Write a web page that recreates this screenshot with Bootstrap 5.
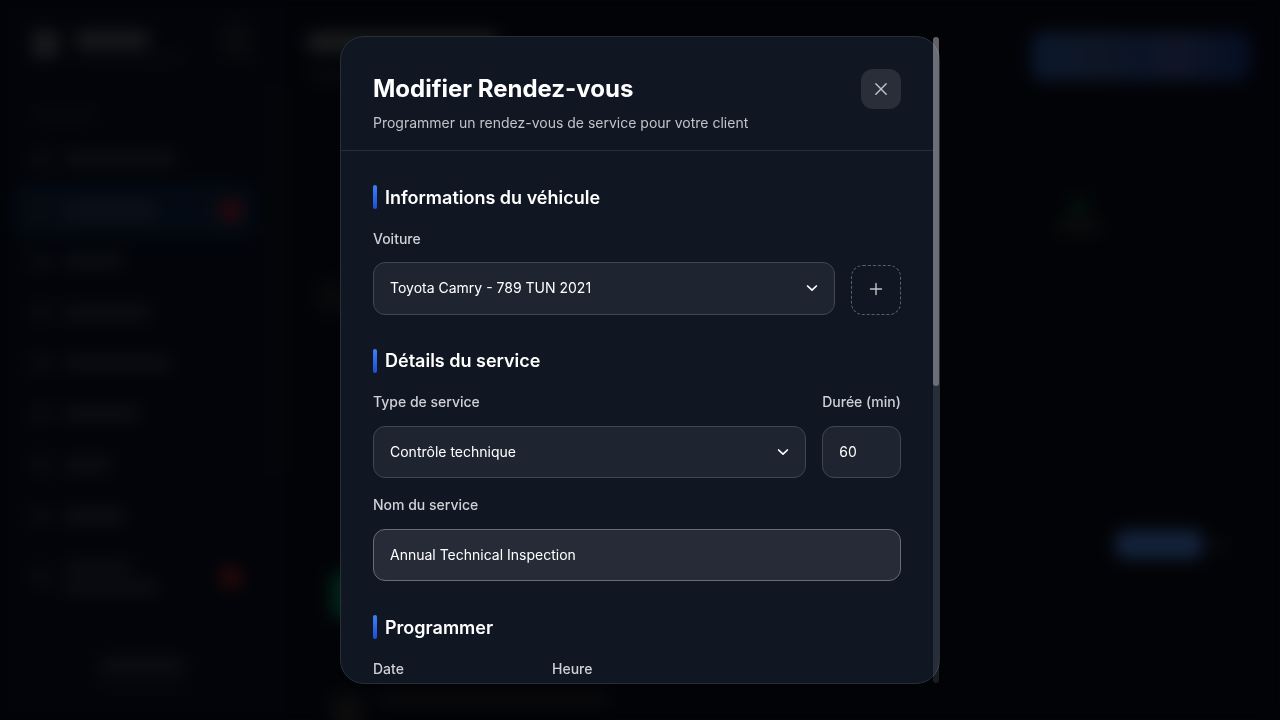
<!DOCTYPE html>
<html lang="fr">
<head>
<meta charset="utf-8">
<meta name="viewport" content="width=device-width, initial-scale=1">
<title>Modifier Rendez-vous</title>
<link href="https://cdn.jsdelivr.net/npm/bootstrap@5.3.0/dist/css/bootstrap.min.css" rel="stylesheet">
<style>
body{font-family:Inter,"Liberation Sans",sans-serif;font-size:14px;line-height:1.6;color:#fff;background:#020307;height:100vh;overflow:hidden}
/* dimmed page behind the dialog */
.backdrop-page{filter:blur(8px);height:720px;background:#020307}
.side-col{width:284px;flex:none;background:#020409;padding:22px 16px 0}
.blob{background:#0c0e12;border-radius:6px}
.side-row{width:238px;height:50.9px;padding:0 12px 0 16px;border-radius:12px;gap:13px}
.side-row.current{background:#040a13}
.side-icon{width:18px;height:18px;background:#090b0f}
.dot-red{width:23px;height:23px;border-radius:50%;background:#28090b;margin-left:auto}
.side-track{width:15px;height:388px;background:#050609;flex:none;margin-top:86px;margin-left:-16px}
.cta{width:218px;height:49px;border-radius:12px;background:linear-gradient(90deg,#0a182c,#0f1625 30%,#0a1326 50%,#101626 65%,#050e24)}
.panel{background:#020306;border-radius:24px}
.status-pill{width:88px;height:29px;border-radius:10px;background:#13223a}
/* dialog */
.overlay{position:fixed;inset:0}
.dialog{position:relative;width:600px;height:648px}
.sheet{height:648px;background:#101723;border:1px solid #292f3a;border-radius:24px;overflow:hidden}
.sheet-inner{width:592px}
.sheet-head{padding:32px 32px 16px;border-bottom:1px solid #292f3a;height:114px}
.sheet-head h1{font-size:24px;font-weight:700;line-height:40px;margin:0}
.sheet-head p{margin:3.2px 0 0;color:#c0c3c9}
.close-btn{width:40px;height:40px;border:0;border-radius:12px;background:#292e39;padding:0}
.sheet-body{padding:32px}
.sec{font-size:18px;font-weight:600;line-height:28px;height:28.8px;margin:0 0 16px;gap:8px}
.sec span{padding-top:.7px}
.field-group + .sec{margin-top:32px}
.sec::before{content:"";width:4px;height:24px;border-radius:2px;background:linear-gradient(#3b82f6,#1d4ed8)}
.lbl{display:block;font-weight:500;color:#cfd1d5;margin-bottom:12px;white-space:nowrap}
.field{height:52.4px;border:1px solid #414651;border-radius:12px;background:#1e2531;padding:0 16px;line-height:50.4px}
.field svg{margin-right:.5px}
.field.hovered{background:#262b37;border-color:#686c77}
.add-btn{width:50px;height:50px;border:1px dashed #5b5f69;border-radius:12px;background:none;padding:0 0 1px}
.dur{width:78.8px;flex:none}
.date-col{width:163px}
.scroll-track{position:absolute;right:1px;top:1px;width:6px;height:646px;border-radius:3px;background:rgba(255,255,255,.1)}
.scroll-thumb{height:349px;border-radius:3px;background:rgba(255,255,255,.31)}
svg{display:block;fill:none;stroke-linecap:round;stroke-linejoin:round}
</style>
</head>
<body>
<div class="backdrop-page d-flex" aria-hidden="true">
  <div class="side-col">
    <div class="d-flex align-items-start px-3" style="height:72px">
      <div class="blob mt-2" style="width:27px;height:28px;background:#18191c"></div>
      <div class="ms-3 mt-1"><div class="blob mt-1" style="width:74px;height:19px;background:#17181a"></div><div class="blob mt-1" style="width:108px;height:9px;background:#08090d"></div></div>
      <div class="blob ms-auto" style="width:31px;height:38px;background:#07090c"></div>
    </div>
    <div class="blob ms-3 mt-3" style="width:66px;height:10px;background:#08090d"></div>
    <div style="height:14px"></div>
    <div class="side-row d-flex align-items-center"><i class="side-icon"></i><i class="blob" style="width:114px;height:14px"></i></div>
    <div class="side-row current d-flex align-items-center"><i class="side-icon"></i><i class="blob" style="width:92px;height:15px;background:#0d1219"></i><i class="dot-red"></i></div>
    <div class="side-row d-flex align-items-center"><i class="side-icon"></i><i class="blob" style="width:60px;height:14px"></i></div>
    <div class="side-row d-flex align-items-center"><i class="side-icon"></i><i class="blob" style="width:88px;height:15px"></i></div>
    <div class="side-row d-flex align-items-center"><i class="side-icon"></i><i class="blob" style="width:108px;height:14px"></i></div>
    <div class="side-row d-flex align-items-center"><i class="side-icon"></i><i class="blob" style="width:76px;height:15px"></i></div>
    <div class="side-row d-flex align-items-center"><i class="side-icon"></i><i class="blob" style="width:48px;height:14px"></i></div>
    <div class="side-row d-flex align-items-center"><i class="side-icon"></i><i class="blob" style="width:62px;height:16px"></i></div>
    <div class="side-row d-flex align-items-center" style="height:72px"><i class="side-icon"></i><div><div class="blob" style="width:70px;height:12px"></div><div class="blob mt-2" style="width:96px;height:13px"></div></div><i class="dot-red"></i></div>
    <div class="d-flex flex-column align-items-center gap-2" style="padding-top:45px"><div class="blob" style="width:86px;height:15px"></div><div class="blob" style="width:86px;height:8px;background:#07080c"></div></div>
  </div>
  <div class="side-track"></div>
  <div class="flex-grow-1 px-4">
    <div class="d-flex justify-content-between pt-4" style="height:96px">
      <div class="pt-2"><div class="blob" style="width:190px;height:21px;background:#191a1b"></div><div class="blob mt-3" style="width:260px;height:12px;background:#090a0c"></div></div>
      <div class="cta mt-2" style="margin-right:6px"></div>
    </div>
    <div class="panel d-flex justify-content-end" style="height:160px">
      <div class="pt-5 mt-5" style="width:228px"><div class="blob" style="width:18px;height:18px;background:#03130b;margin:6px 0 0 42px"></div><div class="blob" style="width:46px;height:13px;background:#0c0c0e;margin:4px 0 0 28px"></div></div>
    </div>
    <div class="blob mt-4" style="width:80px;height:34px;background:#07080a;margin-left:8px"></div>
    <div class="panel d-flex mt-5 align-items-end ps-4" style="height:320px">
      <div class="blob" style="width:90px;height:46px;background:#022318;margin-bottom:64px"></div>
      <div class="status-pill ms-auto" style="margin-bottom:123px"></div><div class="blob ms-2" style="width:13px;height:12px;margin:0 32px 130px 0"></div>
    </div>
    <div class="d-flex ps-4" style="margin-top:12px"><div class="blob" style="width:32px;height:40px;background:#0b0b0c"></div><div class="blob ms-3" style="width:230px;height:12px;background:#0b0b0c"></div></div>
  </div>
</div>

<div class="overlay d-flex align-items-center justify-content-center">
  <div class="dialog" role="dialog" aria-labelledby="dlg-title">
    <div class="sheet"><div class="sheet-inner">
      <header class="sheet-head d-flex justify-content-between align-items-start">
        <div><h1 id="dlg-title">Modifier Rendez-vous</h1><p>Programmer un rendez-vous de service pour votre client</p></div>
        <button class="close-btn d-flex align-items-center justify-content-center" aria-label="Fermer"><svg width="20" height="20" viewBox="0 0 20 20" stroke="#c3c5c9" stroke-width="1.4"><path d="M4.8 4.8l10.4 10.4M15.2 4.8L4.8 15.2"/></svg></button>
      </header>
      <div class="sheet-body">
        <h2 class="sec d-flex align-items-center"><span>Informations du véhicule</span></h2>
        <div class="field-group d-flex align-items-end gap-3">
          <div class="flex-grow-1"><span class="lbl">Voiture</span>
            <div class="field d-flex justify-content-between align-items-center"><span>Toyota Camry - 789 TUN 2021</span><svg width="12" height="12" viewBox="0 0 12 12" stroke="#fff" stroke-width="1.7"><path d="M1.6 4l4.4 4.2L10.4 4"/></svg></div></div>
          <button class="add-btn d-flex align-items-center justify-content-center" aria-label="Ajouter"><svg width="20" height="20" viewBox="0 0 20 20" stroke="#c3c5c9" stroke-width="1.4"><path d="M4.5 10h11M10 4.5v11"/></svg></button>
        </div>
        <h2 class="sec d-flex align-items-center"><span>Détails du service</span></h2>
        <div class="d-flex gap-3">
          <div class="flex-grow-1"><span class="lbl">Type de service</span>
            <div class="field d-flex justify-content-between align-items-center"><span>Contrôle technique</span><svg width="12" height="12" viewBox="0 0 12 12" stroke="#fff" stroke-width="1.7"><path d="M1.6 4l4.4 4.2L10.4 4"/></svg></div></div>
          <div class="dur"><span class="lbl">Durée (min)</span><div class="field">60</div></div>
        </div>
        <div class="field-group mt-3"><span class="lbl">Nom du service</span><div class="field hovered">Annual Technical Inspection</div></div>
        <h2 class="sec d-flex align-items-center"><span>Programmer</span></h2>
        <div class="d-flex gap-3"><span class="lbl date-col">Date</span><span class="lbl">Heure</span></div>
      </div>
    </div></div>
    <div class="scroll-track"><div class="scroll-thumb"></div></div>
  </div>
</div>
<script src="https://cdn.jsdelivr.net/npm/bootstrap@5.3.0/dist/js/bootstrap.bundle.min.js"></script>
</body>
</html>
